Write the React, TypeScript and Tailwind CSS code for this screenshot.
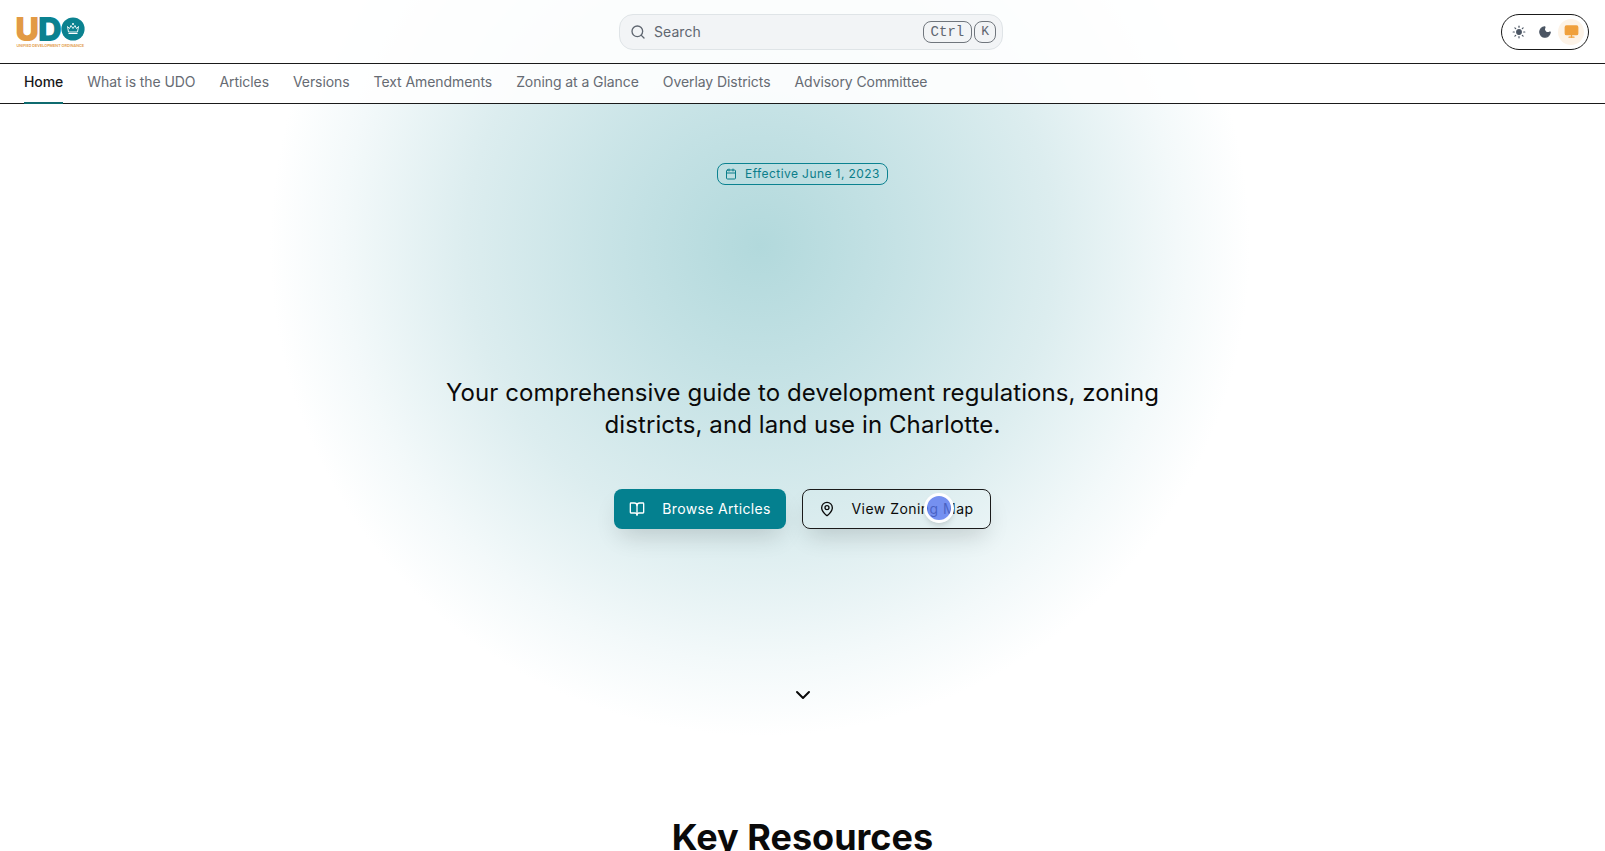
import { BookOpen, Calendar, ChevronDown, MapPin, Monitor, Moon, Search, Sun } from "lucide-react";

const navItems = [
  "Home",
  "What is the UDO",
  "Articles",
  "Versions",
  "Text Amendments",
  "Zoning at a Glance",
  "Overlay Districts",
  "Advisory Committee",
];

function Logo() {
  return (
    <svg width="70" height="32" viewBox="0 0 70 32" className="block overflow-visible">
      <text x="-0.8" y="25" fontFamily="Inter" fontWeight="900" fontSize="33" fill="#e29a45">
        U
      </text>
      <text x="22" y="25" fontFamily="Inter" fontWeight="900" fontSize="33" fill="#0b8290">
        D
      </text>
      <circle cx="57" cy="13" r="11.6" fill="#0b8290" />
      {/* crown */}
      <path d="M51.5 10.5l2 2 1.5-3 2 3 2-3 1.5 3 2-2-1 5.5h-9z" fill="none" stroke="#fff" strokeWidth="0.9" />
      <path d="M52.5 17.5h9" stroke="#fff" strokeWidth="1" />
      <circle cx="57" cy="8" r="1" fill="#fff" />
      <text x="0.5" y="30.5" fontFamily="Inter" fontWeight="600" fontSize="3.75" fill="#e29a45">
        UNIFIED DEVELOPMENT ORDINANCE
      </text>
    </svg>
  );
}

function Header() {
  return (
    <header className="grid h-[64px] grid-cols-[603px_384px_1fr] items-center border-b border-[#1a1a1a] bg-white/90 px-4">
      <Logo />
      <div className="flex h-9 items-center rounded-[14px] border border-[#dfe4e7] bg-[#f2f4f6] pl-[10px] pr-[3px] text-[#5f6670]">
        <Search size={16} />
        <span className="ml-2 text-sm tracking-[0.05px]">Search</span>
        <div className="ml-auto flex gap-[2px] pr-[3px]">
          <kbd className="rounded-lg border border-[#70767d] px-[7px] font-['Liberation_Mono',monospace] text-sm leading-[20px]">
            Ctrl
          </kbd>
          <kbd className="rounded-lg border border-[#70767d] px-[6px] font-['Liberation_Mono',monospace] text-[13px] leading-[20px]">
            K
          </kbd>
        </div>
      </div>
      <div className="flex justify-end">
        <div className="flex h-9 w-[88px] items-center justify-center rounded-full border border-[#1a1a1a]">
          <span className="flex size-[26px] items-center justify-center text-[#4b5563]">
            <Sun size={14} fill="currentColor" />
          </span>
          <span className="flex size-[26px] items-center justify-center text-[#4b5563]">
            <Moon size={14} fill="currentColor" />
          </span>
          <span className="flex size-[26px] items-center justify-center rounded-full bg-[#fdf3e7] text-[#f0a03c]">
            <Monitor size={15} fill="currentColor" />
          </span>
        </div>
      </div>
    </header>
  );
}

function Nav() {
  return (
    <nav className="flex h-[40px] gap-6 border-b border-[#1a1a1a] bg-white/90 px-6 text-sm tracking-[-0.075px]">
      {navItems.map((item, i) => (
        <a
          key={item}
          className={
            i === 0
              ? "-mb-px flex items-center border-b-2 border-[#0f6b6f] pb-[3px] font-medium text-[#18181b]"
              : "-mb-px flex items-center border-b-2 border-transparent pb-[3px] text-[#666b73]"
          }
        >
          {item}
        </a>
      ))}
    </nav>
  );
}

function Hero() {
  return (
    <main className="flex flex-col items-center">
      <div className="mt-[59px] flex h-[22px] w-[171px] items-center justify-center gap-2 rounded-lg border border-[#0b8290] text-xs tracking-[0.42px] text-[#0b7d8a]">
        <Calendar size={12} />
        Effective June 1, 2023
      </div>
      <p className="mt-[192px] w-[768px] text-center text-2xl leading-8 tracking-[0.08px] text-[#0a0a0a]">
        Your comprehensive guide to development regulations, zoning districts, and land use in Charlotte.
      </p>
      <div className="mt-[48px] flex gap-4 text-sm">
        <a className="flex h-10 w-[172px] items-center justify-center gap-[17px] rounded-lg bg-[#04808f] tracking-[0.33px] text-white shadow-[0_12px_24px_-6px_rgba(0,0,0,0.16)]">
          <BookOpen size={16} />
          Browse Articles
        </a>
        <a className="relative flex h-10 w-[189px] items-center justify-center gap-4 rounded-lg border border-[#1a1a1a] tracking-[0.47px] text-[#0a0a0a] shadow-[0_12px_24px_-6px_rgba(0,0,0,0.16)]">
          <MapPin size={16} />
          View Zoning Map
          {/* cursor marker */}
          <span className="absolute left-[121px] top-[3px] size-[30px] rounded-full border-[3px] border-white bg-[#5a78f0]/80 shadow-md" />
        </a>
      </div>
      <ChevronDown className="mt-[154px] text-[#0a0a0a]" size={24} />
      <h2 className="mt-[110px] text-4xl font-bold text-[#0a0a0a]">Key Resources</h2>
    </main>
  );
}

export default function App() {
  return (
    <div className="h-screen overflow-hidden bg-white bg-[radial-gradient(circle_490px_at_760px_246px,#b2d9dc_0%,#c3e1e4_25%,#dcedef_60%,#f3f9fa_85%,#ffffff_100%)] font-['Inter',sans-serif]">
      <Header />
      <Nav />
      <Hero />
    </div>
  );
}
